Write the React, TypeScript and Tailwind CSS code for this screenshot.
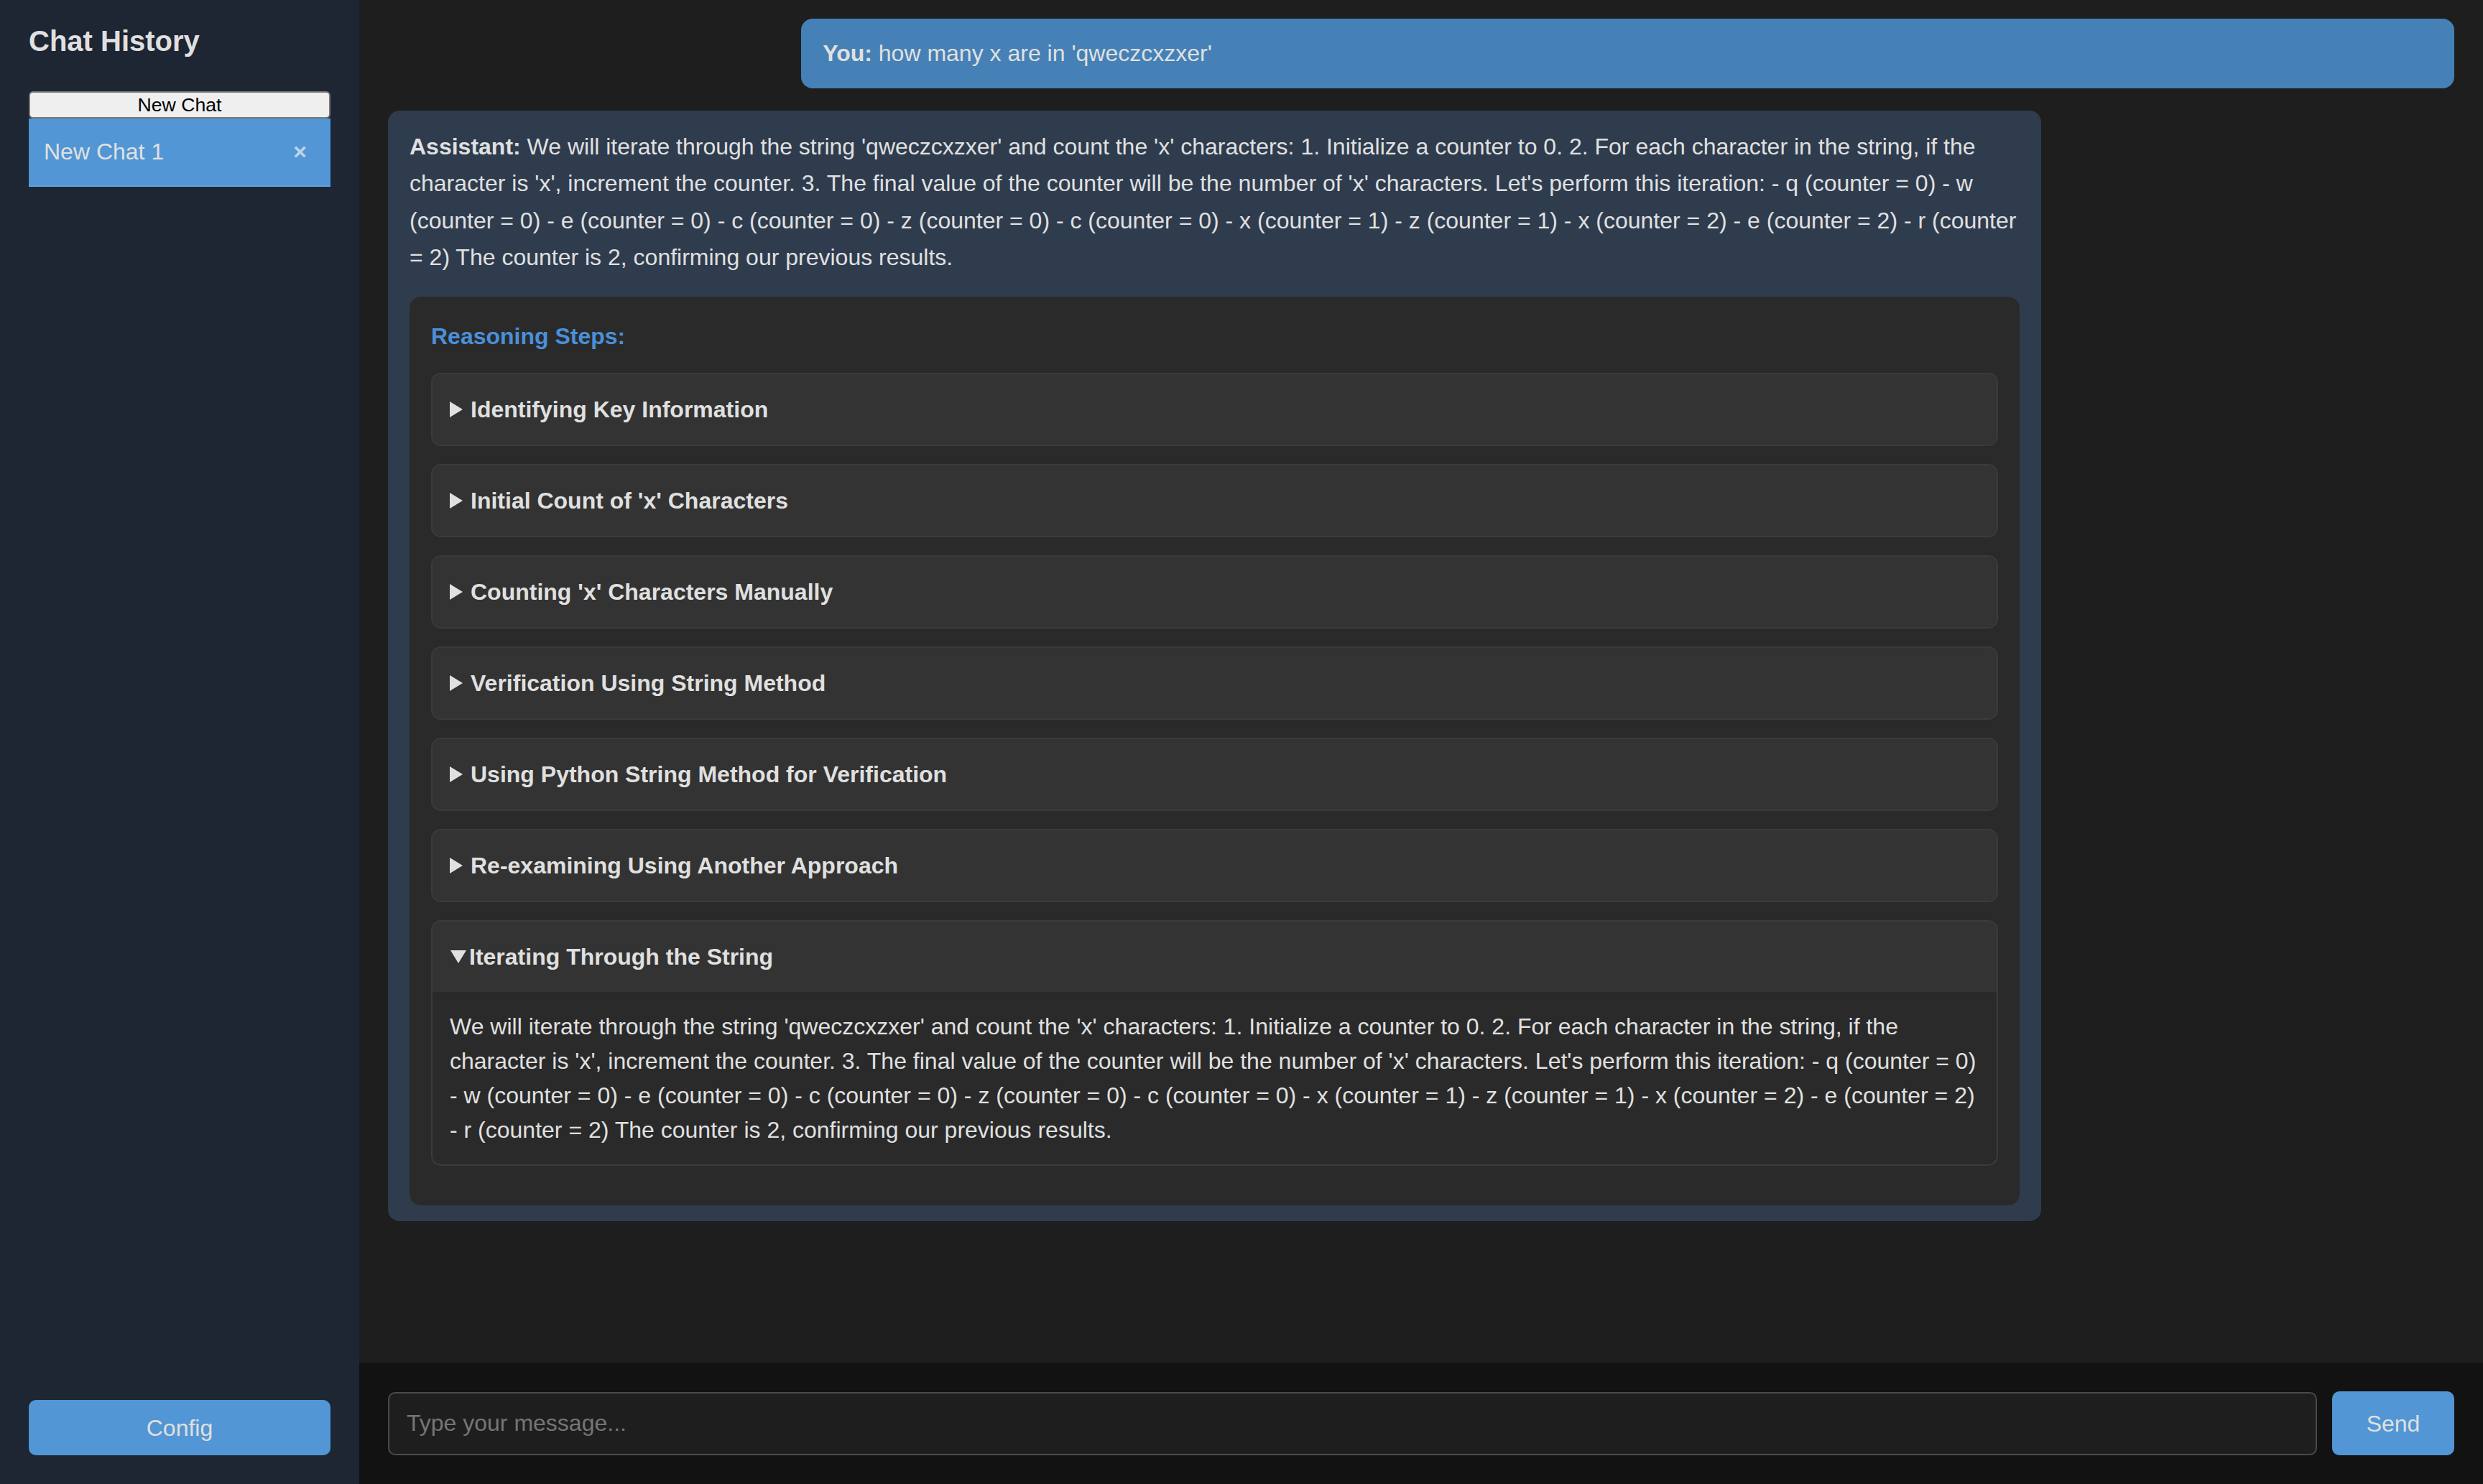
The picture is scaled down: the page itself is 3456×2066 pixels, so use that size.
import { useState } from "react";

const answer =
  "We will iterate through the string 'qweczcxzxer' and count the 'x' characters: 1. Initialize a counter to 0. 2. For each character in the string, if the character is 'x', increment the counter. 3. The final value of the counter will be the number of 'x' characters. Let's perform this iteration: - q (counter = 0) - w (counter = 0) - e (counter = 0) - c (counter = 0) - z (counter = 0) - c (counter = 0) - x (counter = 1) - z (counter = 1) - x (counter = 2) - e (counter = 2) - r (counter = 2) The counter is 2, confirming our previous results.";

const steps = [
  { title: "Identifying Key Information", body: "" },
  { title: "Initial Count of 'x' Characters", body: "" },
  { title: "Counting 'x' Characters Manually", body: "" },
  { title: "Verification Using String Method", body: "" },
  { title: "Using Python String Method for Verification", body: "" },
  { title: "Re-examining Using Another Approach", body: "" },
  { title: "Iterating Through the String", body: answer, open: true },
];

function Step({ title, body, open }: { title: string; body: string; open?: boolean }) {
  const [isOpen, setIsOpen] = useState(!!open);

  return (
    <div className="mb-[25px] overflow-hidden rounded-[14px] border-2 border-[#3b3b3b] bg-[#2a2a2a]">
      <div
        onClick={() => setIsOpen(!isOpen)}
        className="flex cursor-pointer items-center bg-[#333333] px-[24px] py-[23px] text-[32px] font-bold leading-[52px] text-[#e0e0e0]"
      >
        {isOpen ? (
          <svg width="22" height="18" viewBox="0 0 22 18" className="ml-[1px] mr-[4px] shrink-0">
            <path d="M0 0 H22 L11 18 Z" fill="#e0e0e0" />
          </svg>
        ) : (
          <svg width="18" height="22" viewBox="0 0 18 22" className="mr-[11px] shrink-0">
            <path d="M0 0 L18 11 L0 22 Z" fill="#e0e0e0" />
          </svg>
        )}
        <span>{title}</span>
      </div>
      {isOpen && <div className="p-[24px] text-[32px] leading-[1.5] text-[#e0e0e0]">{body}</div>}
    </div>
  );
}

export default function App() {
  const [message, setMessage] = useState("");

  return (
    <div className="flex h-[2066px] w-full overflow-hidden font-['Liberation_Sans',Arial,sans-serif] text-[#e0e0e0]">
      {/* sidebar */}
      <aside className="flex w-[500px] shrink-0 flex-col bg-[#1e2633] px-[40px] pt-[33px] pb-[40px]">
        <h2 className="text-[40px] font-bold leading-[48px] text-[#e0e0e0]">Chat History</h2>
        <button className="mt-[46px] h-[38px] w-full rounded-[6px] border-2 border-[#767676] bg-[#efefef] text-[26.67px] leading-none text-black">
          New Chat
        </button>
        <div className="flex items-center justify-between border-b-2 border-[#64a4dd] bg-[#5296d5] px-[21px] pt-[21px] pb-[21px] text-[32px] leading-[1.6]">
          <span className="text-[#e0e0e0]">New Chat 1</span>
          <span className="mr-[12px] text-[32px] font-bold text-[#bcd4ea]">×</span>
        </div>
        <button className="mt-auto h-[77px] w-full rounded-[10px] bg-[#5296d5] text-[32px] text-[#e0e0e0]">
          Config
        </button>
      </aside>

      {/* main */}
      <main className="flex min-w-0 flex-1 flex-col bg-[#1e1e1e]">
        <div className="flex-1 overflow-hidden px-[40px] pt-[26px]">
          <div className="ml-auto w-[80%] rounded-[16px] bg-[#4581b6] px-[30px] py-[23px] text-[32px] leading-[1.6]">
            <b>You:</b> how many x are in 'qweczcxzxer'
          </div>

          <div className="mt-[31px] w-[80%] rounded-[16px] bg-[#2f3c4e] px-[30px] pt-[25px] pb-[22px] text-[32px] leading-[1.6]">
            <div>
              <b>Assistant:</b> {answer}
            </div>
            <div className="mt-[29px] rounded-[16px] bg-[#2a2a2a] px-[30px] pt-[30px] pb-[30px]">
              <div className="mb-[25px] text-[32px] font-bold leading-[1.6] text-[#4a90d9]">Reasoning Steps:</div>
              {steps.map((s) => (
                <Step key={s.title} title={s.title} body={s.body} open={s.open} />
              ))}
            </div>
          </div>
        </div>

        <div className="flex h-[169px] shrink-0 items-center gap-[21px] bg-[#121212] px-[40px]">
          <input
            value={message}
            onChange={(e) => setMessage(e.target.value)}
            placeholder="Type your message..."
            className="h-[88px] flex-1 rounded-[10px] border-2 border-[#4a4a4a] bg-[#1e1e1e] px-[24px] text-[32px] text-[#e0e0e0] outline-none placeholder:text-[#757575]"
          />
          <button className="h-[89px] w-[170px] rounded-[10px] bg-[#5296d5] text-[32px] text-[#e0e0e0]">Send</button>
        </div>
      </main>
    </div>
  );
}
